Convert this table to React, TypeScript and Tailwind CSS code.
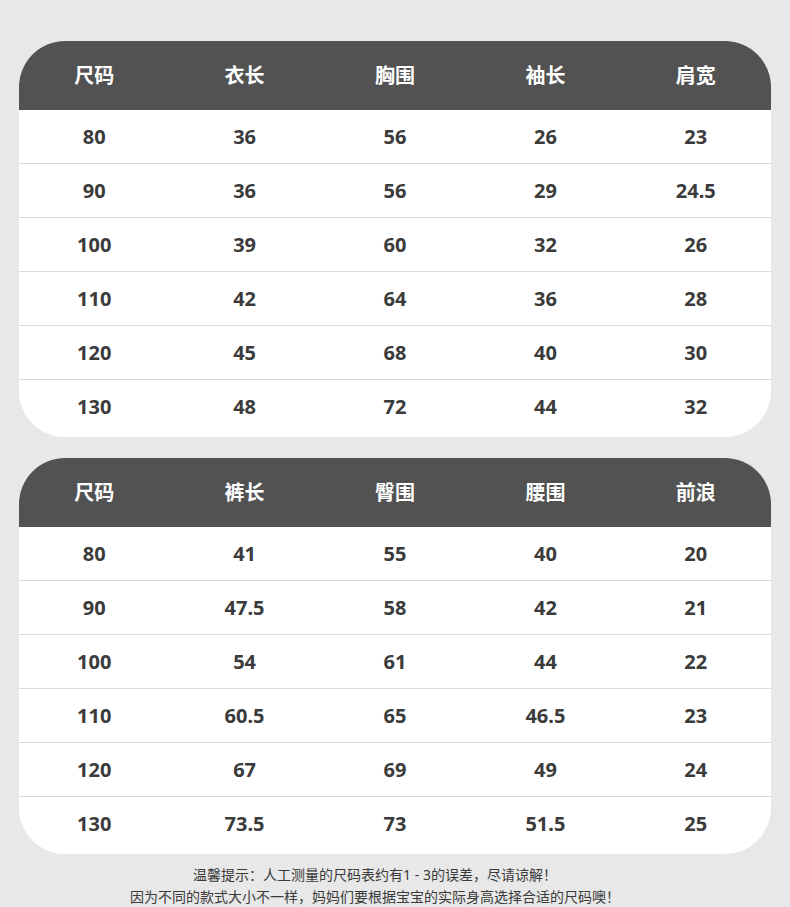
import React from 'react';

const top = {
  head: ['尺码', '衣长', '胸围', '袖长', '肩宽'],
  rows: [
    ['80', '36', '56', '26', '23'],
    ['90', '36', '56', '29', '24.5'],
    ['100', '39', '60', '32', '26'],
    ['110', '42', '64', '36', '28'],
    ['120', '45', '68', '40', '30'],
    ['130', '48', '72', '44', '32'],
  ],
};

const bottom = {
  head: ['尺码', '裤长', '臀围', '腰围', '前浪'],
  rows: [
    ['80', '41', '55', '40', '20'],
    ['90', '47.5', '58', '42', '21'],
    ['100', '54', '61', '44', '22'],
    ['110', '60.5', '65', '46.5', '23'],
    ['120', '67', '69', '49', '24'],
    ['130', '73.5', '73', '51.5', '25'],
  ],
};

function SizeTable({ head, rows }: { head: string[]; rows: string[][] }) {
  return (
    <div className="mx-[19px] rounded-[46px] bg-white overflow-hidden">
      <div className="grid grid-cols-5 h-[69px] items-center bg-[#525252] text-white text-[20px] font-bold">
        {head.map((h) => (
          <div key={h} className="text-center">{h}</div>
        ))}
      </div>
      {rows.map((r, i) => (
        <div
          key={i}
          className={`grid grid-cols-5 items-center text-[20px] font-bold text-[#3b3b3b] ${
            i < rows.length - 1 ? 'h-[54px] border-b border-[#dadada]' : 'h-[57px] pb-[3px]'
          }`}
        >
          {r.map((c, j) => (
            <div key={j} className="text-center">{c}</div>
          ))}
        </div>
      ))}
    </div>
  );
}

export default function App() {
  return (
    <div
      className="w-[790px] h-[907px] bg-[#e8e8e8] pt-[41px] overflow-hidden"
      style={{ fontFamily: '"Noto Sans", "Noto Sans CJK SC", sans-serif' }}
    >
      <SizeTable {...top} />
      <div className="h-[21px]" />
      <SizeTable {...bottom} />
      <div className="pt-[10px] pr-[40px] text-center text-[14px] leading-[22px] text-[#3a3a3a]">
        <p>温馨提示：人工测量的尺码表约有1 - 3的误差，尽请谅解！</p>
        <p>因为不同的款式大小不一样，妈妈们要根据宝宝的实际身高选择合适的尺码噢！</p>
      </div>
    </div>
  );
}
